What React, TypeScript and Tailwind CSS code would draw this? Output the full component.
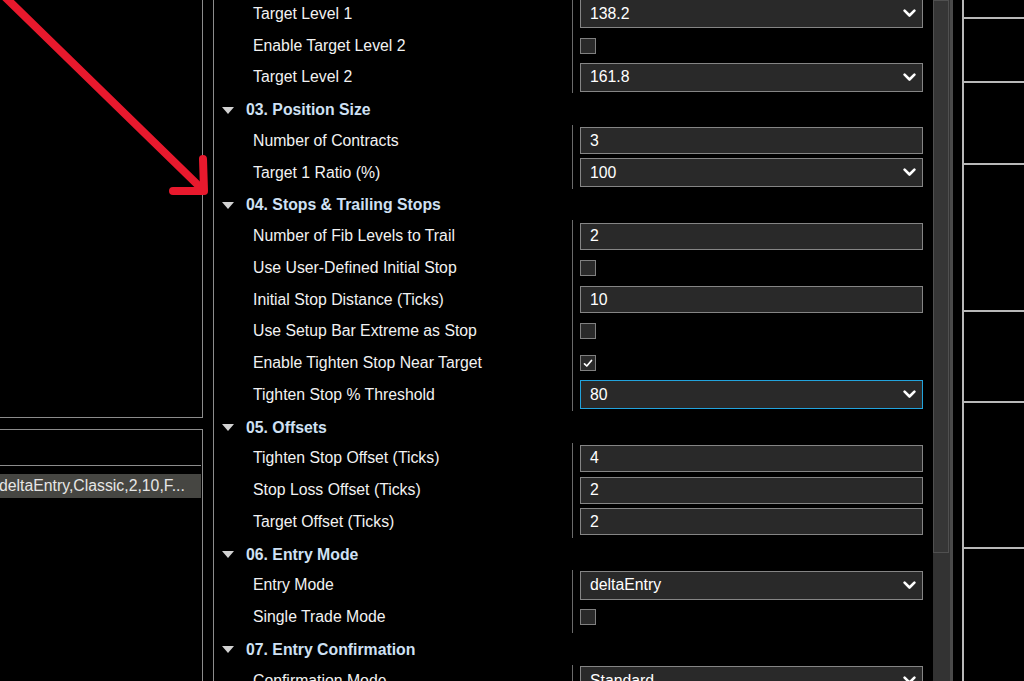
import React from "react";

type Row =
  | { t: "cat"; label: string }
  | { t: "sel"; label: string; value: string; focused?: boolean }
  | { t: "txt"; label: string; value: string }
  | { t: "chk"; label: string; checked: boolean };

const rows: Row[] = [
  { t: "sel", label: "Target Level 1", value: "138.2" },
  { t: "chk", label: "Enable Target Level 2", checked: false },
  { t: "sel", label: "Target Level 2", value: "161.8" },
  { t: "cat", label: "03. Position Size" },
  { t: "txt", label: "Number of Contracts", value: "3" },
  { t: "sel", label: "Target 1 Ratio (%)", value: "100" },
  { t: "cat", label: "04. Stops & Trailing Stops" },
  { t: "txt", label: "Number of Fib Levels to Trail", value: "2" },
  { t: "chk", label: "Use User-Defined Initial Stop", checked: false },
  { t: "txt", label: "Initial Stop Distance (Ticks)", value: "10" },
  { t: "chk", label: "Use Setup Bar Extreme as Stop", checked: false },
  { t: "chk", label: "Enable Tighten Stop Near Target", checked: true },
  { t: "sel", label: "Tighten Stop % Threshold", value: "80", focused: true },
  { t: "cat", label: "05. Offsets" },
  { t: "txt", label: "Tighten Stop Offset (Ticks)", value: "4" },
  { t: "txt", label: "Stop Loss Offset (Ticks)", value: "2" },
  { t: "txt", label: "Target Offset (Ticks)", value: "2" },
  { t: "cat", label: "06. Entry Mode" },
  { t: "sel", label: "Entry Mode", value: "deltaEntry" },
  { t: "chk", label: "Single Trade Mode", checked: false },
  { t: "cat", label: "07. Entry Confirmation" },
  { t: "sel", label: "Confirmation Mode", value: "Standard" },
];

function Chevron() {
  return (
    <svg width="13" height="9" viewBox="0 0 13 9" className="shrink-0">
      <path d="M1.6 1.6 L6.5 6.5 L11.4 1.6" fill="none" stroke="#ffffff" strokeWidth="2.6" strokeLinecap="round" strokeLinejoin="round" />
    </svg>
  );
}

function Triangle() {
  return (
    <svg width="12" height="7" viewBox="0 0 12 7" className="shrink-0">
      <polygon points="0,0 12,0 6,7" fill="#d2d2d2" />
    </svg>
  );
}

function Value({ row }: { row: Row }) {
  if (row.t === "sel") {
    return (
      <div
        className={
          "w-[343px] h-[29px] flex items-center justify-between pl-[9px] pr-[6px] bg-[#292929] border " +
          (row.focused ? "border-[#22a3dc]" : "border-[#858585]")
        }
      >
        <span className="text-white">{row.value}</span>
        <Chevron />
      </div>
    );
  }
  if (row.t === "txt") {
    return (
      <div className="w-[343px] h-[27px] flex items-center pl-[9px] bg-[#292929] border border-[#858585]">
        <span className="text-white">{row.value}</span>
      </div>
    );
  }
  if (row.t === "chk") {
    return (
      <div className="w-[16px] h-[16px] bg-[#2a2a2a] border border-[#808080] flex items-center justify-center">
        {row.checked && (
          <svg width="10" height="9" viewBox="0 0 10 9">
            <path d="M1.5 4.8 L3.8 7 L8.5 1.5" fill="none" stroke="#ffffff" strokeWidth="1.7" strokeLinecap="round" strokeLinejoin="round" />
          </svg>
        )}
      </div>
    );
  }
  return null;
}

export default function App() {
  return (
    <div className="relative w-[1024px] h-[681px] overflow-hidden bg-black flex font-['Liberation_Sans',Arial,sans-serif] text-[15.8px] leading-none">
      {/* Left panel */}
      <div className="w-[203px] shrink-0 flex flex-col">
        <div className="h-[418px] shrink-0 border-r border-b border-[#8c8c8c]" />
        <div className="mt-[11px] flex-1 border-t border-r border-[#8c8c8c] flex flex-col">
          <div className="h-[36px] shrink-0 border-b border-[#8c8c8c] mr-[1px]" />
          <div className="mt-[8px] mr-[1px] h-[24px] bg-[#464642] flex items-center text-[#e6e6e6] whitespace-nowrap overflow-hidden">
            <span className="-ml-[1px]">deltaEntry,Classic,2,10,F...</span>
          </div>
        </div>
      </div>

      {/* Property grid */}
      <div className="ml-[10px] w-[740px] shrink-0 flex border-l border-[#8c8c8c]">
        <div className="w-[719px] shrink-0 flex flex-col -mt-[2px]">
          {rows.map((row, i) =>
            row.t === "cat" ? (
              <div key={i} className="h-[31.75px] shrink-0 flex items-center pl-[8px] pt-[2px]">
                <Triangle />
                <span className="ml-[12px] font-bold text-[#cfe1f4]">{row.label}</span>
              </div>
            ) : (
              <div key={i} className="h-[31.75px] shrink-0 flex">
                <div className="w-[358px] shrink-0 flex items-center pl-[39px] text-[#f2f2f2] whitespace-nowrap">
                  {row.label}
                </div>
                <div className="flex-1 flex items-center pl-[7px] border-l border-[#6a6a6a]">
                  <Value row={row} />
                </div>
              </div>
            )
          )}
        </div>
        {/* Scrollbar */}
        <div className="w-[20px] shrink-0 flex flex-col bg-[#333333] border-r-[3px] border-[#4a4a4a]">
          <div className="h-[553px] shrink-0 border border-[#505050] bg-[#363636] mr-[1px]" />
          <div className="flex-1" />
        </div>
      </div>

      {/* Right panel */}
      <div className="ml-[9px] flex-1 border-l-2 border-[#b8b8b8] flex flex-col">
        <div className="h-[19px] shrink-0 border-b-2 border-[#b8b8b8]" />
        <div className="h-[64px] shrink-0 border-b-2 border-[#b8b8b8]" />
        <div className="h-[82px] shrink-0 border-b-2 border-[#b8b8b8]" />
        <div className="h-[147px] shrink-0 border-b-2 border-[#b8b8b8]" />
        <div className="h-[91px] shrink-0 border-b-2 border-[#b8b8b8]" />
        <div className="h-[146px] shrink-0 border-b-2 border-[#b8b8b8]" />
        <div className="flex-1" />
      </div>

      {/* Red annotation arrow */}
      <svg className="absolute left-0 top-0 pointer-events-none" width="240" height="220" viewBox="0 0 240 220">
        <path d="M4 -4 L201 188" stroke="#e8192d" strokeWidth="8" strokeLinecap="round" fill="none" />
        <path d="M203 159 L204 191 L173 191" stroke="#e8192d" strokeWidth="8" strokeLinecap="round" strokeLinejoin="round" fill="none" />
      </svg>
    </div>
  );
}
